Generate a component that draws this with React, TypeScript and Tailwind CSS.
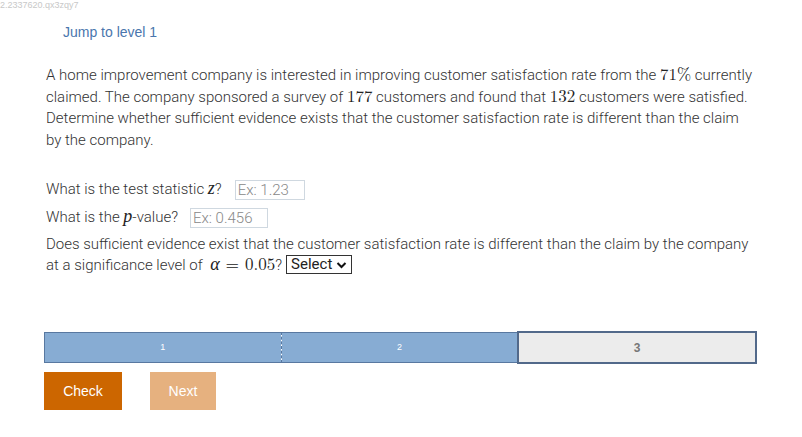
import React from 'react';

const M = ({ children }: { children: React.ReactNode }) => (
  <span className="font-['Latin_Modern_Math','DejaVu_Serif',serif] text-[17px] leading-none font-normal text-[#222]">{children}</span>
);
const MI = ({ children }: { children: React.ReactNode }) => (
  <span className="font-['Liberation_Serif',serif] italic text-[18px] leading-none font-normal text-[#222]">{children}</span>
);

const App: React.FC = () => {
  return (
    <div className="relative w-[802px] h-[437px] bg-white font-['Roboto',sans-serif]">
      <div className="absolute left-0 top-0 text-[9px] leading-[11px] text-[#c8c8c8] font-['Liberation_Sans',sans-serif]">
        2.2337620.qx3zqy7
      </div>

      <div className="pt-[20px] pl-[63px]">
        <a className="text-[14px] leading-[18px] text-[#4a76ad] font-['Liberation_Sans',sans-serif]">Jump to level 1</a>
      </div>

      <div className="pl-[46px] pt-[21px] text-[15px] leading-[21.5px] font-light text-[#333]">
        <p className="w-[708px]">
          A home improvement company is interested in improving customer satisfaction rate from the <M>71%</M> currently
          claimed. The company sponsored a survey of <M>177</M> customers and found that <M>132</M> customers were satisfied.
          Determine whether sufficient evidence exists that the customer satisfaction rate is different than the claim
          by the company.
        </p>

        <div className="mt-[29px] flex items-center h-[20px]">
          <span>What is the test statistic <MI>z</MI>?</span>
          <div className="ml-[13px] w-[70px] h-[20px] border border-[#cfd8e0] px-[2px] text-[#888] leading-[18px]">Ex: 1.23</div>
        </div>
        <div className="mt-[8px] flex items-center h-[20px]">
          <span>What is the <MI>p</MI>-value?</span>
          <div className="ml-[12px] w-[78px] h-[20px] border border-[#cfd8e0] px-[2px] text-[#888] leading-[18px]">Ex: 0.456</div>
        </div>
        <p className="mt-[6px] w-[716px] leading-[21px]">
          Does sufficient evidence exist that the customer satisfaction rate is different than the claim by the company
          at a significance level of <span className="ml-[4px]"><MI>α</MI></span>
          <span className="mx-[6px]"><M>=</M></span>
          <M>0.05</M>?
          <span className="ml-[4px] inline-flex items-center h-[19px] border border-[#333] px-[4px] align-top text-[15px] text-[#222] font-normal leading-[17px]">
            Select
            <svg width="11" height="8" viewBox="0 0 11 8" className="ml-[4px]">
              <path d="M1.5 2 L5.5 6 L9.5 2" stroke="#111" strokeWidth="2" fill="none" />
            </svg>
          </span>
        </p>
      </div>

      <div className="ml-[44px] mt-[56px] flex w-[713px] h-[31px] text-[9px] text-white font-['Liberation_Sans',sans-serif]">
        <div className="flex-1 flex items-center justify-center bg-[#87acd3] border-y border-l border-[#5878a0]">1</div>
        <div className="w-0 border-l border-dashed border-[#5878a0]" />
        <div className="flex-1 flex items-center justify-center bg-[#87acd3] border-y border-[#5878a0]">2</div>
        <div className="flex-1 -my-[1px] h-[33px] flex items-center justify-center bg-[#ececec] border-2 border-[#52698a] text-[12px] font-bold text-[#777]">3</div>
      </div>

      <div className="ml-[44px] mt-[9px] flex gap-[28px] font-['Liberation_Sans',sans-serif] text-[14px] text-white">
        <button className="w-[78px] h-[38px] bg-[#cc6600]">Check</button>
        <button className="w-[66px] h-[38px] bg-[#e6b17f]">Next</button>
      </div>
    </div>
  );
};

export default App;
